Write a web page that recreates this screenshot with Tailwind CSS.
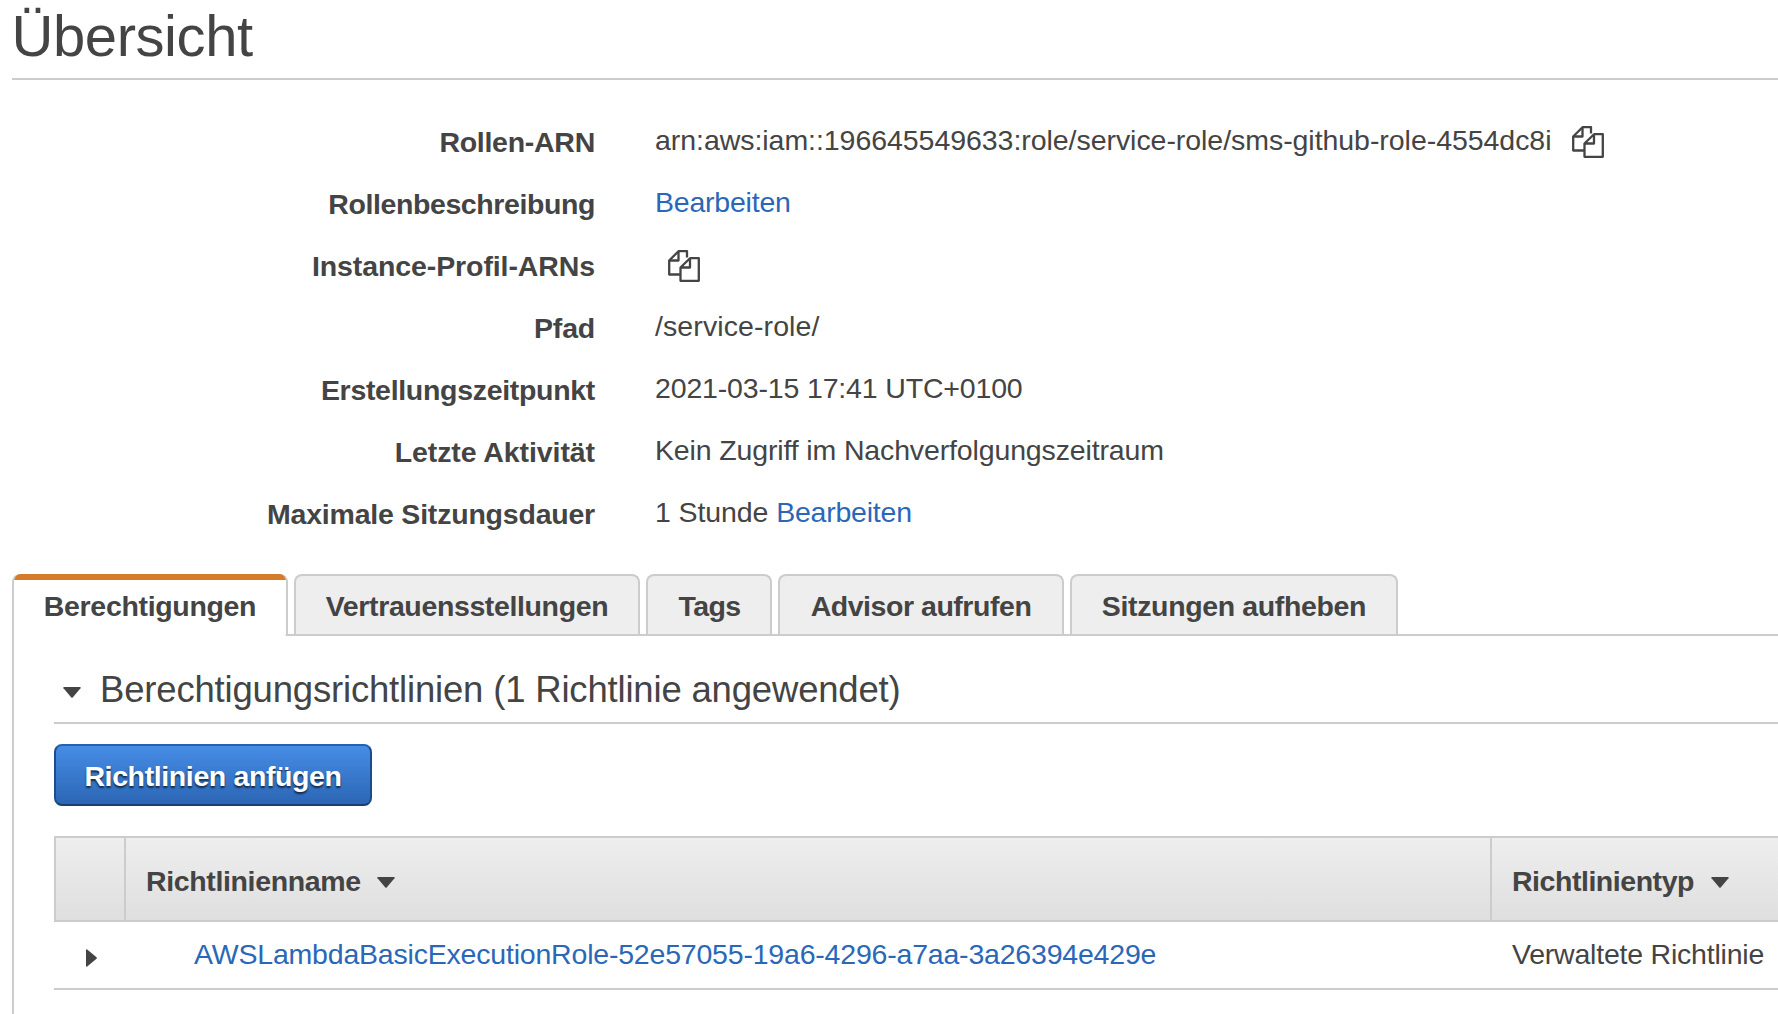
<!DOCTYPE html>
<html lang="de">
<head>
<meta charset="utf-8">
<title>Übersicht</title>
<script src="https://cdn.jsdelivr.net/npm/@tailwindcss/browser@4"></script>
</head>
<body class="h-[1014px] overflow-hidden bg-white pl-3 font-['Liberation_Sans',Arial,sans-serif] text-[28.5px] leading-[32px] whitespace-nowrap text-[#444]">
<svg class="hidden">
  <symbol id="copy" viewBox="0 0 32 32">
    <g fill="none" stroke="#444" stroke-width="2.300" stroke-linejoin="round">
      <path d="M12 24.500H1.200V10.500L10.500 1.200H19V7.500"/>
      <path d="M10.500 1.500V10.500H1.500"/>
      <path d="M22 8.200H30.800V30.800H12.500V17.500L22 8.200V17.500H12.500"/>
    </g>
  </symbol>
</svg>

<h1 class="h-20 border-b-2 border-[#ccc] pt-1 text-[58px] leading-[64px] tracking-[-0.42px]"><span class="-ml-[0.5px] block">Übersicht</span></h1>

<dl class="grid grid-cols-[583px_1fr] gap-x-[60px] pt-[29px] leading-[62px] *:h-[62px]">
  <dt class="pt-[2px] text-right font-bold tracking-[-0.27px]">Rollen-ARN</dt>
  <dd class="flex tracking-[-0.05px]">arn:aws:iam::196645549633:role/service-role/sms-github-role-4554dc8i<svg class="mt-[17px] ml-[20.500px] size-8"><use href="#copy"/></svg></dd>
  <dt class="pt-[2px] text-right font-bold tracking-[-0.4px]">Rollenbeschreibung</dt>
  <dd class="tracking-[-0.22px]"><a class="text-[#2a67b8]">Bearbeiten</a></dd>
  <dt class="pt-[2px] text-right font-bold tracking-[-0.1px]">Instance-Profil-ARNs</dt>
  <dd><svg class="mt-[17px] ml-[13px] size-8"><use href="#copy"/></svg></dd>
  <dt class="pt-[2px] text-right font-bold tracking-[-0.2px]">Pfad</dt>
  <dd class="tracking-[0.1px]">/service-role/</dd>
  <dt class="pt-[2px] text-right font-bold tracking-[-0.31px]">Erstellungszeitpunkt</dt>
  <dd class="tracking-[-0.16px]">2021-03-15 17:41 UTC+0100</dd>
  <dt class="pt-[2px] text-right font-bold tracking-[-0.08px]">Letzte Aktivität</dt>
  <dd class="tracking-[-0.14px]">Kein Zugriff im Nachverfolgungszeitraum</dd>
  <dt class="pt-[2px] text-right font-bold tracking-[-0.21px]">Maximale Sitzungsdauer</dt>
  <dd class="tracking-[-0.1px]">1 Stunde <a class="tracking-[-0.22px] text-[#2a67b8]">Bearbeiten</a></dd>
</dl>

<nav class="mt-[31px] flex h-[62px] gap-[6px] border-b-2 border-[#ccc] text-center leading-[64px] font-bold">
  <div class="relative -mb-[2px] h-[62px] w-[276px] overflow-hidden rounded-t-lg rounded-br-[3px] border-x-2 border-[#ccc] bg-white tracking-[-0.33px] before:absolute before:inset-x-0 before:top-0 before:h-[6px] before:rounded-t-[5px] before:bg-[#d57b2c]">Berechtigungen</div>
  <div class="h-[60px] w-[346px] rounded-t-lg border-x-2 border-t-2 border-[#ccc] bg-[#eee] leading-[60px] tracking-[-0.37px]">Vertrauensstellungen</div>
  <div class="h-[60px] w-[126px] rounded-t-lg border-x-2 border-t-2 border-[#ccc] bg-[#eee] pl-px leading-[60px] tracking-[-0.6px]">Tags</div>
  <div class="h-[60px] w-[286px] rounded-t-lg border-x-2 border-t-2 border-[#ccc] bg-[#eee] leading-[60px] tracking-[-0.46px]">Advisor aufrufen</div>
  <div class="h-[60px] w-[328px] rounded-t-lg border-x-2 border-t-2 border-[#ccc] bg-[#eee] leading-[60px] tracking-[-0.36px]">Sitzungen aufheben</div>
</nav>

<main class="h-[378px] border-l-2 border-[#ccc] pl-10">
  <h2 class="flex h-[88px] border-b-2 border-[#ccc] pt-[33px] pl-[9px] text-[36.5px] leading-[42px] tracking-[-0.18px]">
    <svg class="mt-[18px] mr-[19px] h-[11px] w-[18px] fill-[#444]" viewBox="0 0 18 11"><path d="M.8 0H17.200Q18 .3 17.500 1.200L9.700 10.500Q9 11.200 8.300 10.500L.5 1.200Q0 .3 .8 0Z"/></svg>Berechtigungsrichtlinien (1 Richtlinie angewendet)
  </h2>
  <button class="mt-5 block h-[62px] w-[318px] rounded-lg border-2 border-t-[#2662b4] border-r-[#1d4c8a] border-b-[#163f75] border-l-[#1d4c8a] bg-linear-to-b from-[#468de6] to-[#2c66b5] text-center leading-[60px] font-bold tracking-[-0.38px] text-white [text-shadow:0_2px_2px_rgba(0,0,0,0.65)]"><span class="block h-[58px]">Richtlinien anfügen</span></button>

  <div class="mt-[30px]">
    <div class="grid h-[86px] grid-cols-[70px_1366px_1fr] border-y-2 border-l-2 border-[#ccc] bg-linear-to-b from-[#eee] to-[#dfdfdf] leading-[82px] font-bold">
      <div class="border-r-2 border-[#ccc]"></div>
      <div class="flex items-center border-r-2 border-[#ccc] pt-[2px] pl-5 tracking-[-0.36px]">Richtlinienname<svg class="mt-[3px] ml-[16px] h-[11px] w-[18px] fill-[#444]" viewBox="0 0 18 11"><path d="M.8 0H17.200Q18 .3 17.500 1.200L9.700 10.500Q9 11.200 8.300 10.500L.5 1.200Q0 .3 .8 0Z"/></svg></div>
      <div class="flex items-center pt-[2px] pl-5 tracking-[-0.46px]">Richtlinientyp<svg class="mt-[3px] ml-[17px] h-[11px] w-[18px] fill-[#444]" viewBox="0 0 18 11"><path d="M.8 0H17.200Q18 .3 17.500 1.200L9.700 10.500Q9 11.200 8.300 10.500L.5 1.200Q0 .3 .8 0Z"/></svg></div>
    </div>
    <div class="grid h-[68px] grid-cols-[140px_1318px_1fr] border-b-2 border-[#ccc] leading-[64px]">
      <div class="pt-[27px] pl-8"><svg class="h-[18px] w-[11px] fill-[#444]" viewBox="0 0 11 18"><path d="M0 .8Q.3 0 1.200 .5L10.500 8.300Q11.200 9 10.500 9.700L1.200 17.500Q.3 18 0 17.200Z"/></svg></div>
      <div class="tracking-[-0.2px]"><a class="text-[#2a67b8]">AWSLambdaBasicExecutionRole-52e57055-19a6-4296-a7aa-3a26394e429e</a></div>
      <div class="tracking-[-0.22px]">Verwaltete Richtlinie</div>
    </div>
  </div>
</main>
</body>
</html>
